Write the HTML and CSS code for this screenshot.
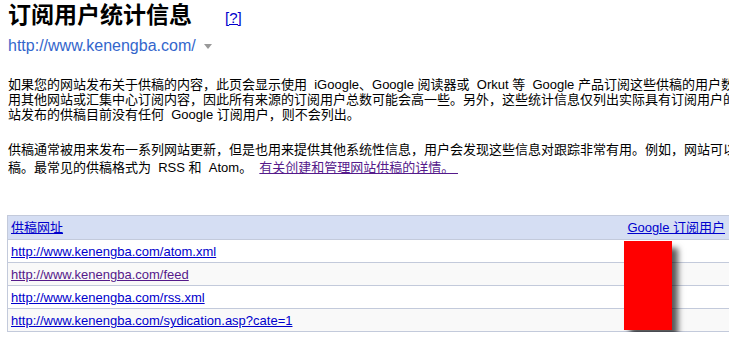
FILE: index.html
```html
<!DOCTYPE html>
<html>
<head>
    <title>订阅用户统计信息</title>
    <link rel="stylesheet" href="styles.css">
</head>
<body>
    <div class="page">
        <h1 class="title">订阅用户统计信息<a class="help-link" href="#">[?]</a></h1>
        <div class="site-url">http://www.kenengba.com/<span class="drop-arrow"></span></div>

        <p class="intro">
            如果您的网站发布关于供稿的内容，此页会显示使用&nbsp; iGoogle、Google 阅读器或&nbsp; Orkut 等&nbsp; Google 产品订阅这些供稿的用户数量。用户也可能使<br>
            用其他网站或汇集中心订阅内容，因此所有来源的订阅用户总数可能会高一些。另外，这些统计信息仅列出实际具有订阅用户的供稿。如果您的网<br>
            站发布的供稿目前没有任何&nbsp; Google 订阅用户，则不会列出。
        </p>

        <p class="intro intro-second">
            供稿通常被用来发布一系列网站更新，但是也用来提供其他系统性信息，用户会发现这些信息对跟踪非常有用。例如，网站可以发布博客文章的供<br>
            稿。最常见的供稿格式为&nbsp; RSS 和&nbsp; Atom。&nbsp; <a class="visited" href="#">有关创建和管理网站供稿的详情。&nbsp;</a>
        </p>

        <div class="feeds">
            <table class="feed-table">
                <tr>
                    <th class="col-url"><a href="#">供稿网址</a></th>
                    <th class="col-count"><a href="#">Google 订阅用户</a></th>
                </tr>
                <tr>
                    <td><a href="#">http://www.kenengba.com/atom.xml</a></td>
                    <td></td>
                </tr>
                <tr class="alt">
                    <td><a class="visited" href="#">http://www.kenengba.com/feed</a></td>
                    <td></td>
                </tr>
                <tr>
                    <td><a href="#">http://www.kenengba.com/rss.xml</a></td>
                    <td></td>
                </tr>
                <tr class="alt">
                    <td><a href="#">http://www.kenengba.com/sydication.asp?cate=1</a></td>
                    <td></td>
                </tr>
            </table>
            <div class="redacted"></div>
        </div>
    </div>
</body>
</html>
```

FILE: styles.css
```css
html {
    overflow: hidden;
}

body {
    margin: 0;
    background-color: #fff;
    color: #000;
    font-family: "Liberation Sans", "Noto Sans CJK SC", sans-serif;
    font-size: 13px;
}

.page {
    padding-left: 8px;
    width: 760px;
}

a {
    color: #0000cc;
}

a.visited {
    color: #551a8b;
}

/* Heading */
.title {
    margin: 0;
    font-size: 23px;
    line-height: 30px;
    font-weight: bold;
    white-space: nowrap;
}

.help-link {
    margin-left: 33px;
    font-size: 15px;
    font-weight: normal;
}

.site-url {
    margin-top: 3px;
    font-size: 16px;
    line-height: 20px;
    color: #3366cc;
}

.drop-arrow {
    display: inline-block;
    margin-left: 8px;
    vertical-align: middle;
    border-left: 4.5px solid transparent;
    border-right: 4.5px solid transparent;
    border-top: 5px solid #999;
}

/* Text blocks */
.intro {
    margin: 21px 0 0 0;
    line-height: 15px;
    white-space: nowrap;
}

.intro-second {
    margin-top: 19px;
    line-height: 18px;
}

/* Feed table */
.feeds {
    position: relative;
    margin-top: 38px;
    margin-left: -1px;
}

.feed-table {
    width: 723px;
    border-collapse: collapse;
    border: 1px solid #c3cadb;
}

.feed-table th {
    background-color: #d5def3;
    font-weight: normal;
    line-height: 16px;
    padding: 4px 4px 3px 3px;
    border-bottom: 1px solid #c3cadb;
}

.feed-table .col-url {
    text-align: left;
}

.feed-table .col-count {
    text-align: right;
}

.feed-table td {
    line-height: 16px;
    padding: 4px 4px 2px 3px;
    border-bottom: 1px solid #c3cadb;
}

.feed-table tr.alt td {
    background-color: #f9f9f9;
}

/* the count column is blanked out in the capture */
.redacted {
    position: absolute;
    left: 617px;
    top: 26px;
    width: 48px;
    height: 89px;
    background-color: #ff0000;
    box-shadow: 6px 7px 6px rgba(0, 0, 0, 0.65);
}
```
